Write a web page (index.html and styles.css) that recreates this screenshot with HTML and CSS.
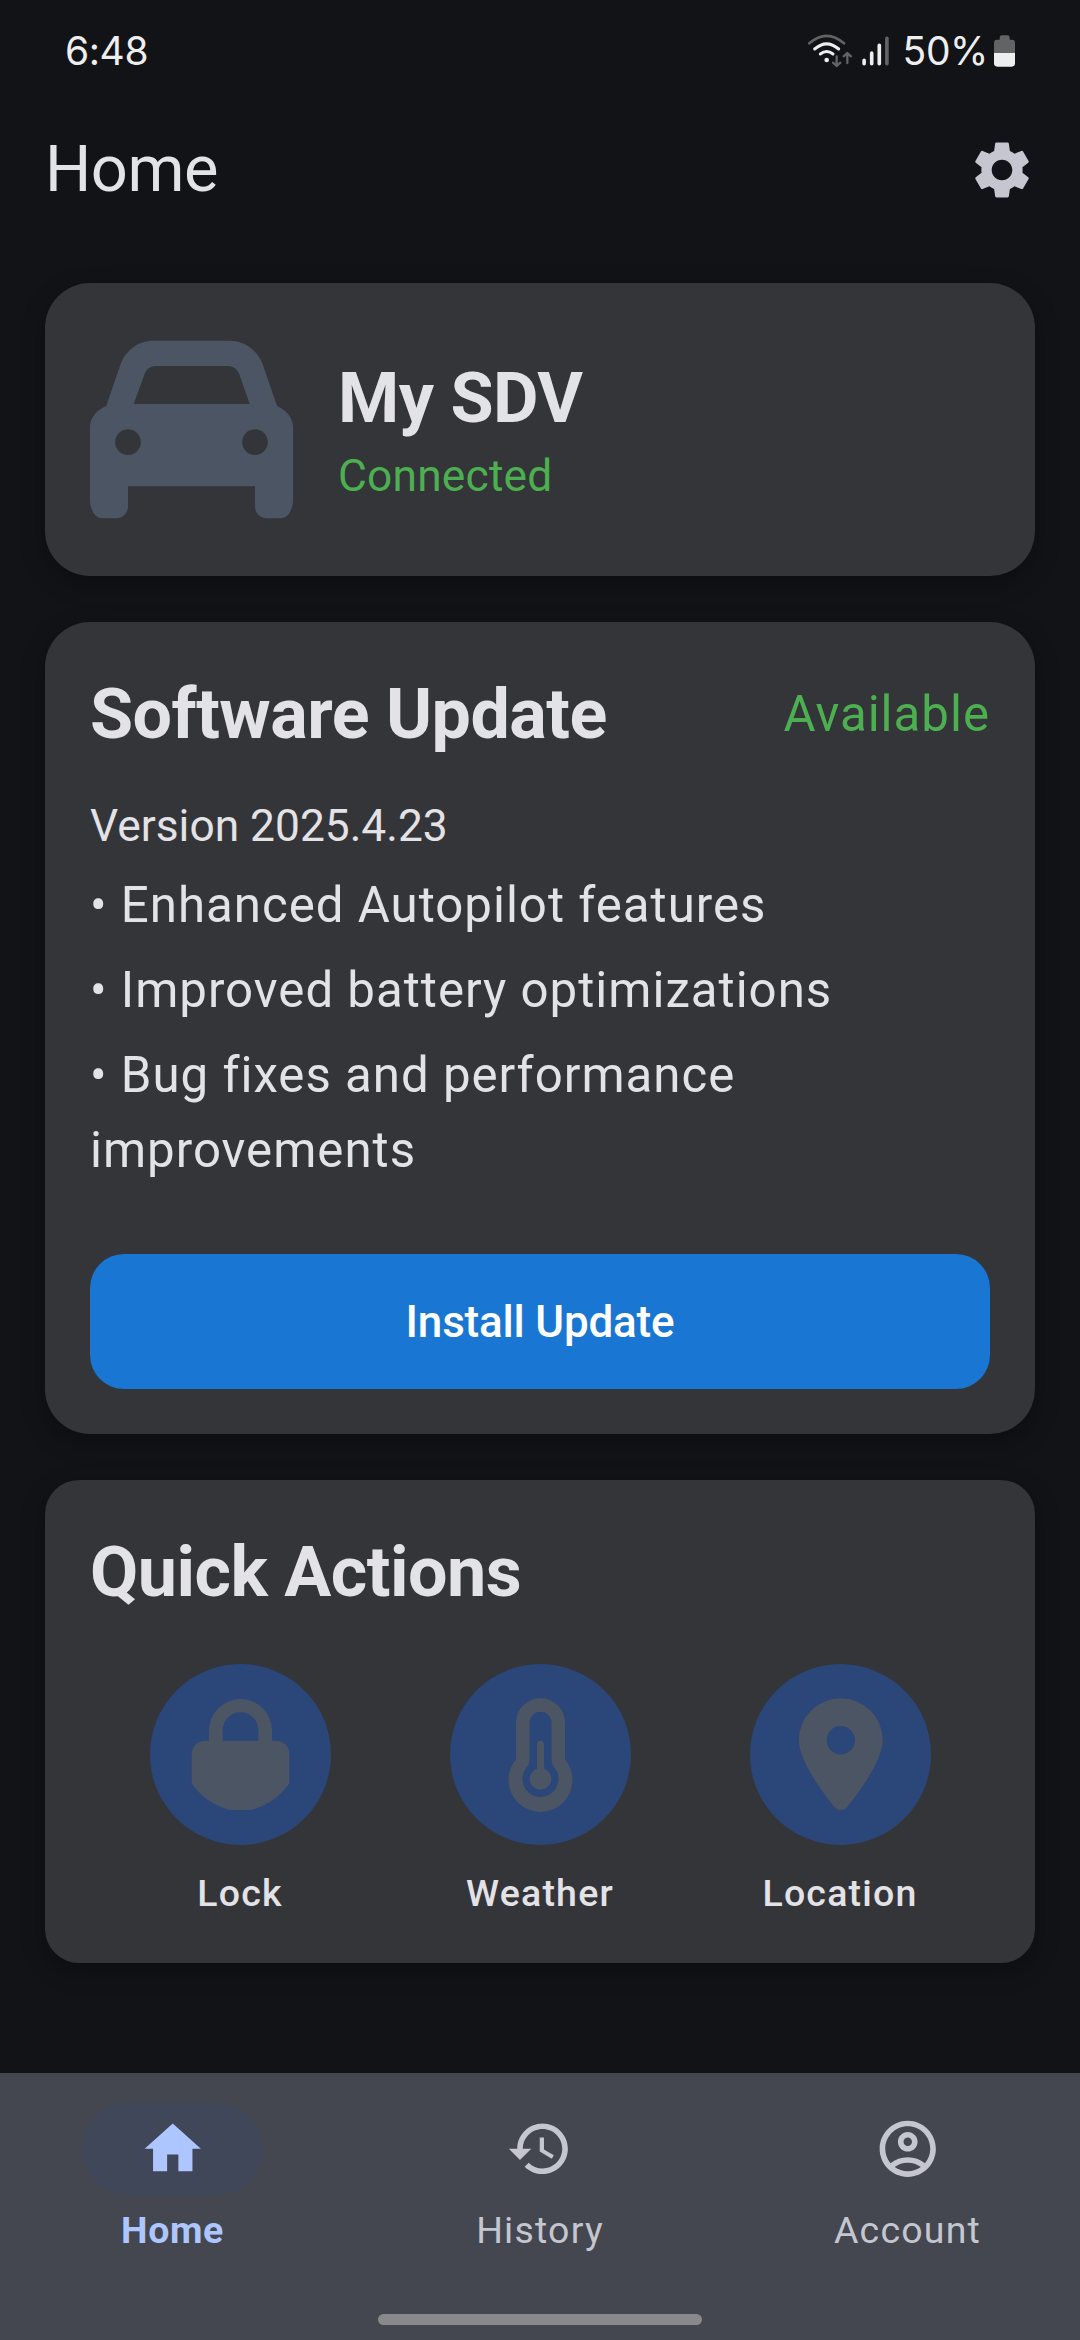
FILE: index.html
```html
<!DOCTYPE html>
<html lang="en">
<head>
<meta charset="utf-8">
<title>Home</title>
<link rel="stylesheet" href="styles.css">
</head>
<body>
<div class="screen">
  <div class="status">
    <span class="status-text">6:48</span>
    <div class="status-right">
      <svg class="wifi" viewBox="84 98 141 108" fill="none" stroke-linecap="round" stroke-linejoin="round">
        <g stroke="#626365" stroke-width="8">
          <path d="M91 129Q143 84 195 129"/>
          <path d="M173 168V197M162 187L173 197L184 187M205 188V158M194 168L205 158L216 168" stroke-width="7"/>
        </g>
        <g stroke="#eeeeee" stroke-width="9">
          <path d="M107 146Q143 115 179 146M124 161Q143 146 162 161"/>
        </g>
        <circle cx="143" cy="179" r="7" fill="#eeeeee"/>
      </svg>
      <svg class="signal" viewBox="249 103 81 97" stroke-width="11" stroke-linecap="round">
        <path d="M255 180V190M278 158V190M301 134V190" stroke="#eeeeee"/>
        <path d="M324 113V190" stroke="#626365"/>
      </svg>
      <span class="status-text percent">50%</span>
      <svg class="battery" viewBox="642 105 63 96">
        <path d="M642 160V128Q642 119 651 119H659V113Q659 106 666 106H682Q689 106 689 113V119H696Q705 119 705 128V160Z" fill="#626365"/>
        <path d="M642 159H705V190Q705 200 695 200H652Q642 200 642 190Z" fill="#eeeeee"/>
      </svg>
    </div>
  </div>

  <header class="appbar">
    <h1>Home</h1>
    <svg class="icon settings" viewBox="0 0 24 24"><path d="M19.43 12.98c.04-.32.07-.64.07-.98s-.03-.66-.07-.98l2.11-1.65c.19-.15.24-.42.12-.64l-2-3.46c-.12-.22-.39-.3-.61-.22l-2.49 1c-.52-.4-1.08-.73-1.69-.98l-.38-2.65C14.46 2.18 14.25 2 14 2h-4c-.25 0-.46.18-.49.42l-.38 2.65c-.61.25-1.17.59-1.69.98l-2.49-1c-.23-.09-.49 0-.61.22l-2 3.46c-.13.22-.07.49.12.64l2.11 1.65c-.04.32-.07.65-.07.98s.03.66.07.98l-2.11 1.65c-.19.15-.24.42-.12.64l2 3.46c.12.22.39.3.61.22l2.49-1c.52.4 1.08.73 1.69.98l.38 2.65c.03.24.24.42.49.42h4c.25 0 .46-.18.49-.42l.38-2.65c.61-.25 1.17-.59 1.69-.98l2.49 1c.23.09.49 0 .61-.22l2-3.46c.12-.22.07-.49-.12-.64l-2.11-1.65zM12 15.75c-2.070 0-3.750-1.680-3.750-3.750s1.680-3.750 3.750-3.750 3.750 1.680 3.750 3.750-1.680 3.750-3.750 3.750z"/></svg>
  </header>

  <main class="content">
    <section class="card vehicle">
      <svg class="car" viewBox="0 0 203 179"><path fill-rule="evenodd" d="M63.2 .7H139.8C155 .7 168 11 173 25L187 66C196.500 70 203 78 203 87V160C203 168 199 178.300 190.500 178.300H177C170 178.300 165 173 165 166.500V146.300H38V166.500C38 173 33 178.300 26 178.300H12.500C4 178.300 0 168 0 160V87C0 78 6.500 70 16.200 66L30.300 25C35 11 48 .7 63.200 .7ZM65.500 26C60.500 26 56.500 29 54.800 33.500L43.700 64H159.700L149 33.500C147 29 143 26 138.500 26ZM38 89.300A12.800 12.800 0 1 0 38 114.900A12.800 12.800 0 1 0 38 89.300ZM165 89.300A12.800 12.800 0 1 0 165 114.900A12.800 12.800 0 1 0 165 89.300Z"/></svg>
      <div class="vehicle-info">
        <h2>My SDV</h2>
        <p class="connected">Connected</p>
      </div>
    </section>

    <section class="card update">
      <div class="update-head">
        <h2>Software Update</h2>
        <span class="available">Available</span>
      </div>
      <p class="version">Version 2025.4.23</p>
      <div class="notes">
        <p>• Enhanced Autopilot features</p>
        <p>• Improved battery optimizations</p>
        <p>• Bug fixes and performance improvements</p>
      </div>
      <button class="install" type="button">Install Update</button>
    </section>

    <section class="card quick">
      <h2>Quick Actions</h2>
      <div class="actions">
        <div class="action">
          <svg class="disc" viewBox="0 0 181 181"><circle cx="90.500" cy="90.500" r="90.500"/><path fill-rule="evenodd" d="M59 76.700V66.500A31.500 31.500 0 0 1 122 66.500V76.700H126A13.300 13.300 0 0 1 139.300 90V119.300Q125 140 101 146H80Q56 140 41.700 119.300V90A13.300 13.300 0 0 1 55 76.700ZM72.700 76.700H108.300V66A17.800 17.800 0 0 0 72.700 66Z"/></svg>
          <span>Lock</span>
        </div>
        <div class="action">
          <svg class="disc" viewBox="0 0 181 181"><circle cx="90.500" cy="90.500" r="90.500"/><path fill-rule="evenodd" d="M66 58.500A24.500 24.500 0 0 1 115 58.500V95.300A32 32 0 1 1 66 95.300ZM79.500 58.700V95C79.500 99.500 78 102 76 104.300A18 18 0 1 0 105 104.300C103 102 101.500 99.500 101.500 95V58.700A11 11 0 0 0 79.500 58.700Z"/><path d="M87 80.200A3.500 3.500 0 0 1 94 80.200V104.700A10.800 10.800 0 1 1 87 104.700Z"/></svg>
          <span>Weather</span>
        </div>
        <div class="action">
          <svg class="disc" viewBox="0 0 181 181"><circle cx="90.500" cy="90.500" r="90.500"/><path fill-rule="evenodd" d="M48.800 76.300A42 42 0 0 1 132.800 76.300C132.800 96 108.500 129 98.500 141.500Q95 146 90.800 146Q86.600 146 83.100 141.500C73.100 129 48.800 96 48.800 76.300ZM90.800 62A14.200 14.200 0 1 0 90.800 90.400A14.200 14.200 0 1 0 90.800 62Z"/></svg>
          <span>Location</span>
        </div>
      </div>
    </section>
  </main>

  <nav class="nav">
    <div class="tabs">
      <div class="tab active">
        <div class="pill"><svg class="icon" viewBox="0 0 24 24"><path d="M10 20v-6h4v6h5v-8h3L12 3 2 12h3v8z"/></svg></div>
        <span>Home</span>
      </div>
      <div class="tab">
        <div class="pill"><svg class="icon" viewBox="0 0 24 24"><path d="M13 3c-4.970 0-9 4.030-9 9H1l3.890 3.890.07.14L9 12H6c0-3.870 3.130-7 7-7s7 3.130 7 7-3.130 7-7 7c-1.930 0-3.680-.79-4.940-2.060l-1.420 1.420C8.270 19.990 10.510 21 13 21c4.970 0 9-4.030 9-9s-4.030-9-9-9zm-1 5v5l4.280 2.540.72-1.210-3.500-2.080V8H12z"/></svg></div>
        <span>History</span>
      </div>
      <div class="tab">
        <div class="pill"><svg class="icon" viewBox="0 0 24 24"><path d="M12 2C6.480 2 2 6.480 2 12s4.480 10 10 10 10-4.480 10-10S17.520 2 12 2zM7.350 18.500C8.660 17.560 10.260 17 12 17s3.340.56 4.650 1.500C15.340 19.440 13.740 20 12 20s-3.340-.56-4.650-1.500zm10.790-1.380C16.450 15.800 14.320 15 12 15s-4.450.8-6.140 2.120C4.700 15.730 4 13.950 4 12c0-4.420 3.580-8 8-8s8 3.580 8 8c0 1.950-.7 3.730-1.860 5.120zM12 6c-1.930 0-3.500 1.570-3.500 3.500S10.070 13 12 13s3.500-1.570 3.500-3.500S13.930 6 12 6zm0 5c-.83 0-1.500-.67-1.500-1.500S11.170 8 12 8s1.500.67 1.500 1.500S12.830 11 12 11z"/></svg></div>
        <span>Account</span>
      </div>
    </div>
    <div class="gesture"></div>
  </nav>
</div>
</body>
</html>
```
FILE: styles.css
```css
* { box-sizing: border-box; margin: 0; padding: 0; }

body {
  width: 1080px;
  height: 2340px;
  background: #111317;
  color: #e3e2e6;
  font-family: Roboto, "Noto Sans", sans-serif;
}

.screen { display: flex; flex-direction: column; height: 2340px; overflow: hidden; }

.status {
  display: flex;
  justify-content: space-between;
  height: 98px;
  padding: 4px 65px 0;
}
.status-text {
  font: 400 39px/94px Inter, sans-serif;
  color: #eeeeee;
  letter-spacing: -0.4px;
}
.status-right { display: flex; align-items: center; }
.wifi { width: 47px; height: 36px; margin-right: 8px; }
.signal { width: 27px; height: 32px; margin-right: 14px; }
.percent { margin-right: 6px; }
.battery { width: 21px; height: 32px; }

.appbar {
  display: flex;
  align-items: center;
  justify-content: space-between;
  height: 142px;
  padding: 0 45px;
}
.appbar h1 { font-size: 65px; font-weight: 400; line-height: 80px; letter-spacing: -0.5px; }
.icon { width: 67.5px; height: 67.5px; fill: #c5c6d0; display: block; }
.settings { width: 66px; height: 66px; margin-top: 2px; }

.content { flex: 1; display: flex; flex-direction: column; gap: 46px; padding: 43px 45px 0; }
.card {
  background: #343538;
  border-radius: 45px;
  box-shadow: 0 8px 24px rgba(0, 0, 0, 0.3);
}
.card h2 { font-size: 70px; font-weight: 700; line-height: 92px; letter-spacing: -0.5px; }

.vehicle { display: flex; align-items: center; gap: 45px; height: 293px; padding: 0 45px; }
.car { width: 203px; height: 179px; fill: #4c5563; }
.connected { font-size: 44.3px; line-height: 64px; letter-spacing: 0.2px; color: #4caf50; }

.update { height: 812px; padding: 45px; }
.update-head { display: flex; justify-content: space-between; align-items: center; height: 94px; }
.available { font-size: 49.2px; letter-spacing: 1px; color: #4caf50; }
.version { margin-top: 33px; font-size: 44.3px; line-height: 64px; }
.notes { display: flex; flex-direction: column; gap: 10px; margin-top: 10px; }
.notes p { font-size: 49.2px; line-height: 75px; letter-spacing: 1px; }
.install {
  display: block;
  width: 100%;
  height: 135px;
  margin-top: 66px;
  border: 0;
  border-radius: 34px;
  background: #1976d2;
  color: #ffffff;
  font: 500 44px/64px Roboto, sans-serif;
  letter-spacing: -0.2px;
}

.quick { height: 483px; padding: 46px 0 0; border-radius: 34px; }
.quick h2 { padding-left: 45px; }
.actions { display: grid; grid-template-columns: repeat(3, 300px); justify-content: center; margin-top: 46px; }
.action { display: flex; flex-direction: column; align-items: center; }
.action span { margin-top: 21px; font-size: 37.5px; font-weight: 500; line-height: 54px; letter-spacing: 1.2px; }
.disc { width: 181px; height: 181px; fill: #4c5563; display: block; }
.disc circle { fill: #2b4678; }

.nav {
  display: flex;
  flex-direction: column;
  align-items: center;
  justify-content: space-between;
  height: 267px;
  padding: 30px 0 15px;
  background: #44474f;
}
.tabs { display: grid; grid-template-columns: repeat(3, 367.500px); }
.tab { display: flex; flex-direction: column; align-items: center; color: #c5c6d0; }
.tab span { margin-top: 8px; font-size: 37.5px; line-height: 54px; letter-spacing: 1.2px; }
.pill { display: flex; align-items: center; justify-content: center; width: 181px; height: 92px; border-radius: 46px; }
.active { color: #adc6ff; }
.active .pill { background: #404759; }
.active .icon { fill: #adc6ff; }
.active span { font-weight: 700; letter-spacing: 0.6px; }
.gesture { width: 324px; height: 11px; border-radius: 5.500px; background: #89898c; }
```
